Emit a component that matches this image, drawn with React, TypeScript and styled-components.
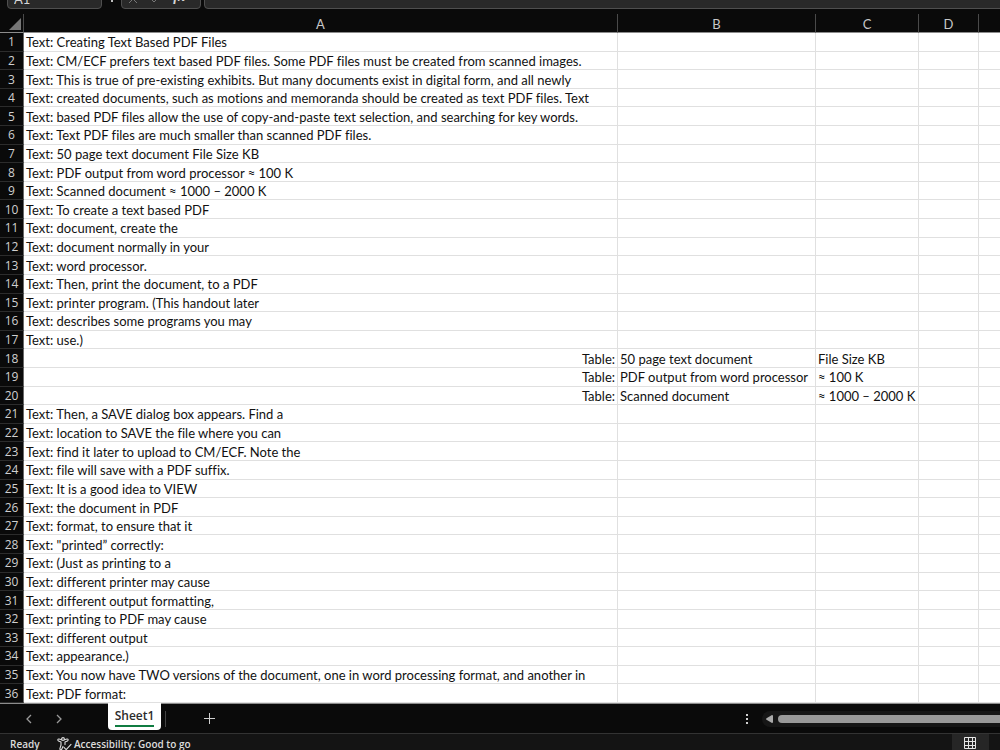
import React from "react";
import styled, { createGlobalStyle } from "styled-components";

const GlobalStyle = createGlobalStyle`
  * { box-sizing: border-box; }
  html, body, #root { height: 100%; margin: 0; }
  body { background: #0a0a0a; overflow: hidden; }
`;

const SHEET_FONT = `Lato, "Liberation Sans", sans-serif`;
const UI_FONT = `"Open Sans", "Noto Sans", sans-serif`;

const Page = styled.div`
  display: flex;
  flex-direction: column;
  height: 100vh;
  font-family: ${SHEET_FONT};
  font-variant-ligatures: none;
  background: #0a0a0a;
`;

const FormulaStrip = styled.header`
  display: flex;
  align-items: flex-end;
  height: 9px;
  margin-bottom: 5px;
  padding-left: 7px;
  overflow: hidden;
  flex: none;
`;

const boxLook = `
  height: 28px;
  background: #292929;
  border: 1px solid #4f4f4f;
  border-radius: 4px;
  color: #d6d6d6;
`;

const NameBox = styled.input`
  ${boxLook}
  width: 95px;
  padding: 7px 6px 0;
  font: 13px ${SHEET_FONT};
`;

const StripDots = styled.span`
  width: 19px;
  height: 9px;
  display: flex;
  justify-content: center;
  &::before {
    content: "";
    width: 2px;
    height: 2px;
    background: #bdbdbd;
  }
`;

const FunctionBox = styled.div`
  ${boxLook}
  width: 80px;
  display: flex;
  align-items: flex-end;
  justify-content: space-between;
  padding: 0 15px 4px 6px;
`;

const PlainButton = styled.button`
  display: flex;
  align-items: center;
  justify-content: center;
  padding: 0;
  border: 0;
  background: none;
  color: inherit;
  font: inherit;
`;

const EntryButton = styled(PlainButton)`
  color: #777;
`;

const FunctionButton = styled(PlainButton)`
  font: italic bold 14px/14px "Liberation Serif", serif;
`;

const FormulaInput = styled.input`
  ${boxLook}
  flex: 1;
  min-width: 0;
  margin: 0 -6px 0 3px;
`;

const SheetArea = styled.main`
  flex: 1;
  min-height: 0;
  background: #fff;
`;

const Grid = styled.table`
  width: 100%;
  height: 100%;
  table-layout: fixed;
  border-collapse: separate;
  border-spacing: 0;
  font-size: 13px;
  line-height: 16px;
`;

const Col = styled.col<{ $width?: number }>`
  width: ${(p) => (p.$width ? `${p.$width}px` : "auto")};
`;

const ColumnHead = styled.th`
  height: 19px;
  padding: 2px 0 0;
  background: #0a0a0a;
  color: #c8c8c8;
  font-weight: 400;
  border-right: 1px solid #4a4a4a;
  border-bottom: 1px solid #8c8c8c;
  &:last-child { border-right: 0; }
`;

const Corner = styled(ColumnHead)`
  vertical-align: bottom;
  svg { display: block; margin: 0 2px 2px auto; }
`;

const RowHead = styled.th`
  padding: 1px 0 0;
  background: #0a0a0a;
  color: #d0d0d0;
  font: 400 12px/16px ${UI_FONT};
  border-right: 1px solid #6a6a6a;
  border-bottom: 1px solid #2c2c2c;
`;

const Cell = styled.td<{ $end?: boolean }>`
  padding: 1px 2px 0;
  color: #111;
  text-align: ${(p) => (p.$end ? "right" : "left")};
  white-space: nowrap;
  border-right: 1px solid #e0e0e0;
  border-bottom: 1px solid #e0e0e0;
  &:last-child { border-right: 0; }
`;

const TabBar = styled.nav`
  flex: none;
  display: flex;
  align-items: center;
  height: 30px;
  border-top: 1px solid #8c8c8c;
  color: #d0d0d0;
`;

const NavButtons = styled.div`
  display: flex;
  width: 108px;
  padding-left: 14px;
`;

const NavButton = styled(PlainButton)`
  width: 30px;
  height: 24px;
  color: #9a9a9a;
`;

const SheetTab = styled(PlainButton)`
  align-self: flex-start;
  width: 53px;
  height: 27px;
  margin-top: -1px;
  background: #fff;
  border-radius: 0 0 4px 4px;
  color: #2b2b2b;
  font: 600 12px/20px ${UI_FONT};
`;

const TabName = styled.span`
  border-bottom: 2px solid #107c41;
  height: 21px;
`;

const Divider = styled.span`
  width: 1px;
  height: 16px;
  margin-left: 4px;
  background: #444;
`;

const AddButton = styled(PlainButton)`
  width: 24px;
  height: 24px;
  margin-left: 31px;
`;

const ScrollZone = styled.div`
  display: flex;
  align-items: center;
  width: 260px;
  margin-left: auto;
`;

const MoreButton = styled(PlainButton)`
  width: 14px;
  height: 20px;
  margin-right: 8px;
`;

const ScrollTrack = styled.div`
  display: flex;
  align-items: center;
  flex: 1;
  height: 16px;
  padding-left: 4px;
  gap: 5px;
  background: #161616;
  border-radius: 8px 0 0 8px;
`;

const ScrollThumb = styled.div`
  flex: 1;
  height: 8px;
  background: #999;
  border-radius: 4px 0 0 4px;
`;

const StatusBar = styled.footer`
  flex: none;
  display: flex;
  align-items: center;
  height: 17px;
  padding-left: 10px;
  overflow: hidden;
  background: #141414;
  border-top: 1px solid #333;
  color: #dcdcdc;
  font: 600 10px/14px ${UI_FONT};
`;

const StatusItem = styled.span`
  width: 47px;
  padding-top: 4px;
`;

const StatusButton = styled(PlainButton)`
  gap: 2px;
  padding-top: 4px;
`;

const ViewButton = styled(PlainButton)`
  align-self: stretch;
  width: 37px;
  margin: 0 11px 0 auto;
  padding: 2px 2px 0 0;
  background: #262626;
`;

type Row = { a: string; b?: string; c?: string };

const text = (s: string): Row => ({ a: `Text: ${s}` });
const entry = (b: string, c: string): Row => ({ a: "Table:", b, c });

const rows: Row[] = [
  text("Creating Text Based PDF Files"),
  text("CM/ECF prefers text based PDF files. Some PDF files must be created from scanned images."),
  text("This is true of pre-existing exhibits. But many documents exist in digital form, and all newly"),
  text("created documents, such as motions and memoranda should be created as text PDF files. Text"),
  text("based PDF files allow the use of copy-and-paste text selection, and searching for key words."),
  text("Text PDF files are much smaller than scanned PDF files."),
  text("50 page text document File Size KB"),
  text("PDF output from word processor ≈ 100 K"),
  text("Scanned document ≈ 1000 – 2000 K"),
  text("To create a text based PDF"),
  text("document, create the"),
  text("document normally in your"),
  text("word processor."),
  text("Then, print the document, to a PDF"),
  text("printer program. (This handout later"),
  text("describes some programs you may"),
  text("use.)"),
  entry("50 page text document", "File Size KB"),
  entry("PDF output from word processor", "≈ 100 K"),
  entry("Scanned document", "≈ 1000 – 2000 K"),
  text("Then, a SAVE dialog box appears. Find a"),
  text("location to SAVE the file where you can"),
  text("find it later to upload to CM/ECF. Note the"),
  text("file will save with a PDF suffix."),
  text("It is a good idea to VIEW"),
  text("the document in PDF"),
  text("format, to ensure that it"),
  text("\"printed” correctly:"),
  text("(Just as printing to a"),
  text("different printer may cause"),
  text("different output formatting,"),
  text("printing to PDF may cause"),
  text("different output"),
  text("appearance.)"),
  text("You now have TWO versions of the document, one in word processing format, and another in"),
  text("PDF format:"),
];

const Chevron = ({ d }: { d: string }) => (
  <svg width="8" height="10" viewBox="0 0 8 10" fill="none" stroke="currentColor" strokeWidth="1.3">
    <path d={d} />
  </svg>
);

const AccessibilityIcon = () => (
  <svg width="15" height="14" viewBox="0 0 15 14" fill="none" stroke="currentColor" strokeWidth="1.1" strokeLinecap="round" strokeLinejoin="round">
    <circle cx="6" cy="2" r="1.4" />
    <path d="M4.6 2.8 2 2C.7 1.8.4 3.4 1.5 3.9L4 5v3l-1.1 3.6c-.2 1.3 1.3 1.7 1.8.6L6 9.4" />
    <path d="M7.4 2.8 10 2c1.3-.2 1.6 1.4.5 1.9L8 5v2.6" />
    <path d="m7 10.4 2.2 2.2 4.8-5.2" />
  </svg>
);

export default function App() {
  return (
    <>
      <GlobalStyle />
      <Page>
        <FormulaStrip>
          <NameBox aria-label="Name box" defaultValue="A1" />
          <StripDots />
          <FunctionBox>
            <EntryButton aria-label="Cancel">
              <svg width="10" height="10" viewBox="0 0 10 10" fill="none" stroke="currentColor">
                <path d="m1 1 8 8M9 1 1 9" />
              </svg>
            </EntryButton>
            <EntryButton aria-label="Enter">
              <svg width="12" height="10" viewBox="0 0 12 10" fill="none" stroke="currentColor">
                <path d="m1 5 3 3 7-7" />
              </svg>
            </EntryButton>
            <FunctionButton aria-label="Insert function">fx</FunctionButton>
          </FunctionBox>
          <FormulaInput aria-label="Formula bar" />
        </FormulaStrip>

        <SheetArea>
          <Grid>
            <colgroup>
              <Col $width={24} />
              <Col $width={594} />
              <Col $width={198} />
              <Col $width={103} />
              <Col $width={60} />
              <Col />
            </colgroup>
            <thead>
              <tr>
                <Corner aria-label="Select all">
                  <svg width="12" height="12" viewBox="0 0 12 12" fill="#777">
                    <path d="M12 0v12H0z" />
                  </svg>
                </Corner>
                {["A", "B", "C", "D", ""].map((name) => (
                  <ColumnHead key={name} scope="col">{name}</ColumnHead>
                ))}
              </tr>
            </thead>
            <tbody>
              {rows.map((row, i) => (
                <tr key={i}>
                  <RowHead scope="row">{i + 1}</RowHead>
                  <Cell $end={row.b !== undefined}>{row.a}</Cell>
                  <Cell>{row.b}</Cell>
                  <Cell>{row.c}</Cell>
                  <Cell />
                  <Cell />
                </tr>
              ))}
            </tbody>
          </Grid>
        </SheetArea>

        <TabBar aria-label="Sheets">
          <NavButtons>
            <NavButton aria-label="Previous sheet"><Chevron d="M6 1 2 5l4 4" /></NavButton>
            <NavButton aria-label="Next sheet"><Chevron d="m2 1 4 4-4 4" /></NavButton>
          </NavButtons>
          <SheetTab><TabName>Sheet1</TabName></SheetTab>
          <Divider />
          <AddButton aria-label="New sheet">
            <svg width="11" height="11" viewBox="0 0 11 11" stroke="currentColor" fill="none">
              <path d="M5.5 0v11M0 5.5h11" />
            </svg>
          </AddButton>
          <ScrollZone>
            <MoreButton aria-label="Tab options">
              <svg width="2" height="10" viewBox="0 0 2 10" fill="currentColor">
                <path d="M0 0h2v2H0zM0 4h2v2H0zM0 8h2v2H0z" />
              </svg>
            </MoreButton>
            <ScrollTrack>
              <PlainButton aria-label="Scroll left">
                <svg width="7" height="8" viewBox="0 0 7 8" fill="#aaa">
                  <path d="M6 0Q7 0 7 1v6q0 1-1 1L.5 4.8q-.8-.8 0-1.6z" />
                </svg>
              </PlainButton>
              <ScrollThumb />
            </ScrollTrack>
          </ScrollZone>
        </TabBar>

        <StatusBar>
          <StatusItem>Ready</StatusItem>
          <StatusButton><AccessibilityIcon />Accessibility: Good to go</StatusButton>
          <ViewButton aria-label="Normal view">
            <svg width="12" height="12" viewBox="0 0 12 12" fill="none" stroke="#e6e6e6">
              <path d="M.5.5h11v11H.5zM4.5 0v12M8.5 0v12M0 4.5h12M0 8.5h12" />
            </svg>
          </ViewButton>
        </StatusBar>
      </Page>
    </>
  );
}
